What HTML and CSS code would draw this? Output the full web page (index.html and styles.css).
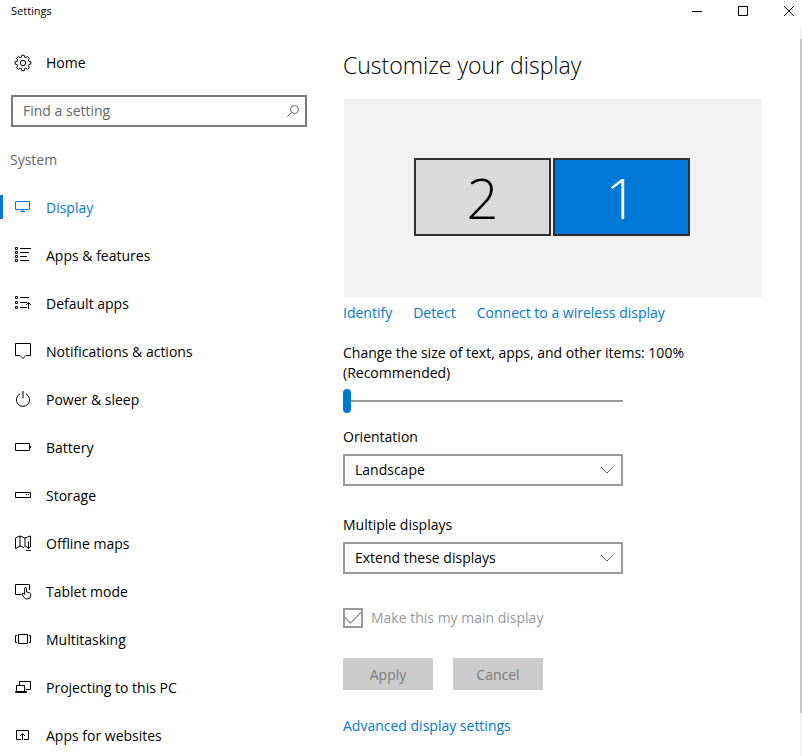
FILE: index.html
```html
<!DOCTYPE html>
<html lang="en">
<head>
    <meta charset="UTF-8">
    <meta name="viewport" content="width=device-width, initial-scale=1.0">
    <title>Settings</title>
    <link rel="stylesheet" href="styles.css">
</head>
<body>
    <div class="window">
        <header class="titlebar">
            <span class="title">Settings</span>
            <div class="window-buttons">
                <button aria-label="Minimize"><svg viewBox="0 0 10 10"><path d="M0 5.5h10"/></svg></button>
                <button aria-label="Maximize"><svg viewBox="0 0 10 10"><path d="M.5.5h9v9h-9z"/></svg></button>
                <button aria-label="Close"><svg viewBox="0 0 10 10"><path d="M0 0l10 10M10 0L0 10"/></svg></button>
            </div>
        </header>

        <div class="layout">
            <aside class="sidebar">
                <a href="#" class="nav-item">
                    <svg class="icon" viewBox="0 0 18 18"><path d="M7.8 1.2h2.4l.4 2 1.2.5 1.7-1.2 1.9 1.9-1.1 1.7.5 1.2 2 .4v2.4l-2 .5-.5 1.1 1.1 1.8-1.9 1.8-1.7-1.1-1.2.5-.4 2H7.8l-.4-2-1.2-.5-1.7 1.1-1.9-1.8 1.1-1.8-.5-1.1-2-.5V7.7l2-.4.5-1.2-1.1-1.7 1.9-1.9 1.7 1.2 1.2-.5z"/><circle cx="9" cy="9" r="2.7"/></svg>
                    Home
                </a>

                <div class="search">
                    <input type="text" placeholder="Find a setting" aria-label="Find a setting">
                    <svg class="search-icon" viewBox="0 0 12 12"><circle cx="7.5" cy="4.5" r="4"/><path d="M4.6 7.4L.4 11.6"/></svg>
                </div>

                <h2>System</h2>

                <nav>
                    <a href="#" class="nav-item active">
                        <svg class="icon" viewBox="0 0 18 18"><path d="M1.5 2.5h14v8h-14zM8.5 11v2M6 12.5h5"/></svg>
                        Display
                    </a>
                    <a href="#" class="nav-item">
                        <svg class="icon" viewBox="0 0 18 18"><path d="M1.5.5h2v2h-2zM1.5 4.5h2v2h-2zM1.5 8.5h2v2h-2zM1.5 12.5h2v2h-2zM6 1.5h11M6 5.5h9M6 9.5h7M6 13.5h9"/></svg>
                        Apps &amp; features
                    </a>
                    <a href="#" class="nav-item">
                        <svg class="icon" viewBox="0 0 18 18"><path d="M1.5 1.5h2v2h-2zM1.5 6.5h2v2h-2zM1.5 11.5h2v2h-2zM6 2.5h9M6 7.5h7M6 12.5h7M14.5 14V8M12 10l2.5-2.5L17 10"/></svg>
                        Default apps
                    </a>
                    <a href="#" class="nav-item">
                        <svg class="icon" viewBox="0 0 18 18"><path d="M1.5.5h15v12H12l-3 3-3-3H1.5z"/></svg>
                        Notifications &amp; actions
                    </a>
                    <a href="#" class="nav-item">
                        <svg class="icon" viewBox="0 0 18 18"><path d="M6 2.9a6.6 6.6 0 1 0 6 0M9 0v7.5"/></svg>
                        Power &amp; sleep
                    </a>
                    <a href="#" class="nav-item">
                        <svg class="icon" viewBox="0 0 18 18"><path d="M1.5 4.5h14v7h-14zM16.5 7v2"/></svg>
                        Battery
                    </a>
                    <a href="#" class="nav-item">
                        <svg class="icon" viewBox="0 0 18 18"><path d="M1.5 5.5h15v5h-15zM12 7.5h1M14 7.5h1"/></svg>
                        Storage
                    </a>
                    <a href="#" class="nav-item">
                        <svg class="icon" viewBox="0 0 18 18"><path d="M10 12.5L6 11l-4.5 2.5V3L6 1l5 2 5.5-2v10M6 1v10M11 3v9M14.5 6.5v7M12 11l2.500 2.500L17 11M12 15.500h5"/></svg>
                        Offline maps
                    </a>
                    <a href="#" class="nav-item">
                        <svg class="icon" viewBox="0 0 18 18"><path d="M7.5 11.5h-6v-10h14V7M10.5 11V5.5a1 1 0 0 1 2 0V9l3 .6q1.2.4 1.2 1.6v1.500q0 3.300-3.500 3.300-2.200 0-3.200-1.700L8 11.500q0-1.700 1.500-1l1 1.200"/></svg>
                        Tablet mode
                    </a>
                    <a href="#" class="nav-item">
                        <svg class="icon" viewBox="0 0 18 18"><path d="M4.5 3.5h9v9h-9zM3 4.5H1.5v7H3M15 4.5h1.5v7H15"/></svg>
                        Multitasking
                    </a>
                    <a href="#" class="nav-item">
                        <svg class="icon" viewBox="0 0 18 18"><path d="M5.5 6V2.5h11v8H12M2.5 12V6.5h8V12M1.5 13.5h11v-1h-11z"/></svg>
                        Projecting to this PC
                    </a>
                    <a href="#" class="nav-item">
                        <svg class="icon" viewBox="0 0 18 18"><path d="M7 12.5H2.5v-9h12v9H10M8.500 13V7M6 9l2.500-2.500L11 9"/></svg>
                        Apps for websites
                    </a>
                </nav>
            </aside>

            <main class="content">
                <h1>Customize your display</h1>

                <div class="preview">
                    <button class="monitor">2</button>
                    <button class="monitor selected">1</button>
                </div>

                <div class="links">
                    <a href="#">Identify</a>
                    <a href="#">Detect</a>
                    <a href="#">Connect to a wireless display</a>
                </div>

                <div class="field scale">
                    <label for="scale">Change the size of text, apps, and other items: 100% (Recommended)</label>
                    <input type="range" id="scale" min="100" max="175" step="25" value="100">
                </div>

                <div class="field orientation">
                    <label for="orientation">Orientation</label>
                    <div class="select">
                        <select id="orientation">
                            <option>Landscape</option>
                            <option>Portrait</option>
                        </select>
                        <svg class="chevron" viewBox="0 0 14 8"><path d="M1 1l6 6 6-6"/></svg>
                    </div>
                </div>

                <div class="field multiple">
                    <label for="multiple">Multiple displays</label>
                    <div class="select">
                        <select id="multiple">
                            <option>Extend these displays</option>
                            <option>Duplicate these displays</option>
                        </select>
                        <svg class="chevron" viewBox="0 0 14 8"><path d="M1 1l6 6 6-6"/></svg>
                    </div>
                </div>

                <label class="checkbox-label">
                    <span class="checkbox">
                        <input type="checkbox" checked disabled>
                        <svg class="check" viewBox="0 0 20 20"><path d="M2 9.5l5.5 5.5L18 4.5"/></svg>
                    </span>
                    Make this my main display
                </label>

                <div class="buttons">
                    <button disabled>Apply</button>
                    <button disabled>Cancel</button>
                </div>

                <a href="#" class="advanced">Advanced display settings</a>
            </main>

            <div class="scrollbar"><div class="thumb"></div></div>
        </div>
    </div>
</body>
</html>
```
FILE: styles.css
```css
* {
    box-sizing: border-box;
}

body {
    margin: 0;
    background: #fff;
    color: #000;
    font-family: 'Segoe UI', 'Open Sans', sans-serif;
    font-size: 14px;
    line-height: 20px;
}

button,
input,
select {
    font: inherit;
    color: inherit;
    margin: 0;
}

a {
    color: #0078d7;
    text-decoration: none;
}

svg {
    display: block;
    fill: none;
    stroke: currentColor;
}

.window {
    height: 100vh;
    display: flex;
    flex-direction: column;
    overflow: hidden;
}

/* title bar */
.titlebar {
    display: flex;
    justify-content: space-between;
    align-items: center;
    height: 22px;
    flex-shrink: 0;
    padding-left: 11px;
}

.title {
    font-size: 11px;
}

.window-buttons {
    display: flex;
    gap: 20px;
}

.window-buttons button {
    width: 26px;
    height: 22px;
    padding: 0 8px;
    border: none;
    background: none;
}

.window-buttons svg {
    width: 10px;
    height: 10px;
}

.layout {
    display: flex;
    flex: 1;
    min-height: 0;
}

/* sidebar */
.sidebar {
    width: 307px;
    flex-shrink: 0;
    padding-top: 17px;
}

.nav-item {
    display: flex;
    align-items: center;
    gap: 14px;
    height: 48px;
    padding-left: 14px;
    color: #000;
}

.nav-item.active {
    color: #0078d7;
    position: relative;
}

.nav-item.active::before {
    content: '';
    position: absolute;
    left: 0;
    top: 11px;
    width: 3px;
    height: 24px;
    background: #0078d7;
}

.icon {
    width: 18px;
    height: 18px;
}

.search {
    position: relative;
    margin: 8px 0 0 11px;
}

.search input {
    display: block;
    width: 100%;
    height: 32px;
    padding: 0 32px 2px 10px;
    border: 2px solid #7a7a7a;
    background: #fff;
    outline: none;
}

.search input::placeholder {
    color: #666;
    opacity: 1;
}

.search-icon {
    position: absolute;
    right: 8px;
    top: 10px;
    width: 12px;
    height: 12px;
    color: #666;
}

h2 {
    margin: 23px 0 14px 10px;
    font-size: 14px;
    font-weight: 400;
    color: #666;
}

/* content */
.content {
    flex: 1;
    min-width: 0;
    padding: 27px 38px 0 36px;
}

h1 {
    margin: 0 0 18px;
    font-size: 23px;
    font-weight: 300;
    line-height: 32px;
}

.preview {
    display: flex;
    justify-content: center;
    align-items: center;
    gap: 2px;
    height: 198px;
    margin-left: 1px;
    padding: 0 2px 2px 0;
    background: #f1f1f1;
}

.monitor {
    width: 137px;
    height: 78px;
    padding: 0;
    border: 2px solid #2f2f2f;
    background: #dadada;
    font-size: 56px;
    font-weight: 300;
    line-height: 74px;
}

.monitor.selected {
    background: #0078d7;
    color: #fff;
}

.links {
    display: flex;
    gap: 21px;
    margin-top: 6px;
}

.field label {
    display: block;
}

.scale {
    max-width: 360px;
    margin-top: 20px;
}

.scale input {
    display: block;
    width: 280px;
    height: 24px;
    margin-top: 6px;
    appearance: none;
    background: none;
}

.scale input::-webkit-slider-runnable-track {
    height: 24px;
    background: linear-gradient(#999, #999) center / 100% 2px no-repeat;
}

.scale input::-webkit-slider-thumb {
    appearance: none;
    width: 8px;
    height: 24px;
    border-radius: 4px;
    background: #0078d7;
}

.orientation {
    margin-top: 14px;
}

.multiple {
    margin-top: 29px;
}

.select {
    position: relative;
    width: 280px;
    margin-top: 7px;
}

.select select {
    display: block;
    width: 100%;
    height: 32px;
    padding: 0 32px 0 10px;
    border: 2px solid #999;
    border-radius: 0;
    background: #fff;
    appearance: none;
}

.chevron {
    position: absolute;
    right: 9px;
    top: 12px;
    width: 14px;
    height: 8px;
    color: #666;
    pointer-events: none;
}

.checkbox-label {
    display: flex;
    align-items: center;
    gap: 8px;
    margin-top: 34px;
    color: #999;
}

.checkbox {
    position: relative;
    width: 20px;
    height: 20px;
}

.checkbox input {
    display: block;
    width: 20px;
    height: 20px;
    border: 2px solid #999;
    appearance: none;
}

.check {
    position: absolute;
    inset: 0;
    stroke-width: 1.4;
}

.buttons {
    display: flex;
    gap: 20px;
    margin: 30px 0 26px;
}

.buttons button {
    width: 90px;
    height: 32px;
    padding: 2px 0 0;
    border: none;
    background: #ccc;
    color: #7a7a7a;
}

/* scrollbar */
.scrollbar {
    width: 2px;
    margin-top: 5px;
    padding-top: 12px;
    background: #f2f2f2;
}

.thumb {
    height: 94%;
    background: #c6c6c6;
}
```
